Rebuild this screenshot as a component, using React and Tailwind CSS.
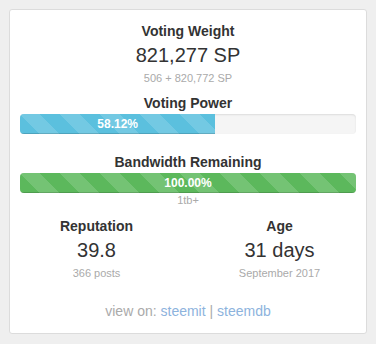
const stripes =
  "bg-[linear-gradient(45deg,rgba(255,255,255,.15)_25%,transparent_25%,transparent_50%,rgba(255,255,255,.15)_50%,rgba(255,255,255,.15)_75%,transparent_75%,transparent)] bg-[length:40px_40px]";

function Bar({ value, color }) {
  return (
    <div className="h-[20px] rounded-[4px] bg-[#f5f5f5] shadow-[inset_0_1px_2px_rgba(0,0,0,0.1)] overflow-hidden">
      <div
        className={`h-full ${color} ${stripes} shadow-[inset_0_-1px_0_rgba(0,0,0,0.15)] text-white text-[12px] font-bold leading-[20px] text-center`}
        style={{ width: `${value}%` }}
      >
        {value.toFixed(2)}%
      </div>
    </div>
  );
}

function Stat({ label, value, sub }) {
  return (
    <div className="text-center">
      <h3 className="text-[14px] font-bold leading-[20px] text-[#333]">{label}</h3>
      <p className="mt-[2px] text-[20px] leading-[24px] text-[#333]">{value}</p>
      <p className="mt-[4px] text-[11px] leading-[14px] text-[#aaa]">{sub}</p>
    </div>
  );
}

export default function App() {
  return (
    <div className="w-[376px] h-[344px] bg-[#efefef] pt-[9px] pl-[9px] font-['Liberation_Sans',Arial,sans-serif]">
      <div className="w-[358px] bg-white border border-[#dcdcdc] rounded-[3px] px-[10px] pt-[11px] pb-[13px]">
        <Stat label="Voting Weight" value="821,277 SP" sub="506 + 820,772 SP" />

        <h3 className="mt-[8px] text-center text-[14px] font-bold leading-[20px] text-[#333]">Voting Power</h3>
        <div className="mt-[1px]">
          <Bar value={58.12} color="bg-[#5bc0de]" />
        </div>

        <h3 className="mt-[18px] text-center text-[14px] font-bold leading-[20px] text-[#333]">Bandwidth Remaining</h3>
        <div className="mt-[1px]">
          <Bar value={100} color="bg-[#5cb85c]" />
        </div>
        <p className="text-center text-[11px] leading-[14px] text-[#aaa]">1tb+</p>

        <div className="-mx-[15px] mt-[9px] grid grid-cols-2">
          <Stat label="Reputation" value="39.8" sub="366 posts" />
          <Stat label="Age" value="31 days" sub="September 2017" />
        </div>

        <p className="mt-[22px] text-center text-[14px] leading-[18px] text-[#aaa]">
          view on: <a className="text-[#8db3dd]">steemit</a> | <a className="text-[#8db3dd]">steemdb</a>
        </p>
      </div>
    </div>
  );
}
